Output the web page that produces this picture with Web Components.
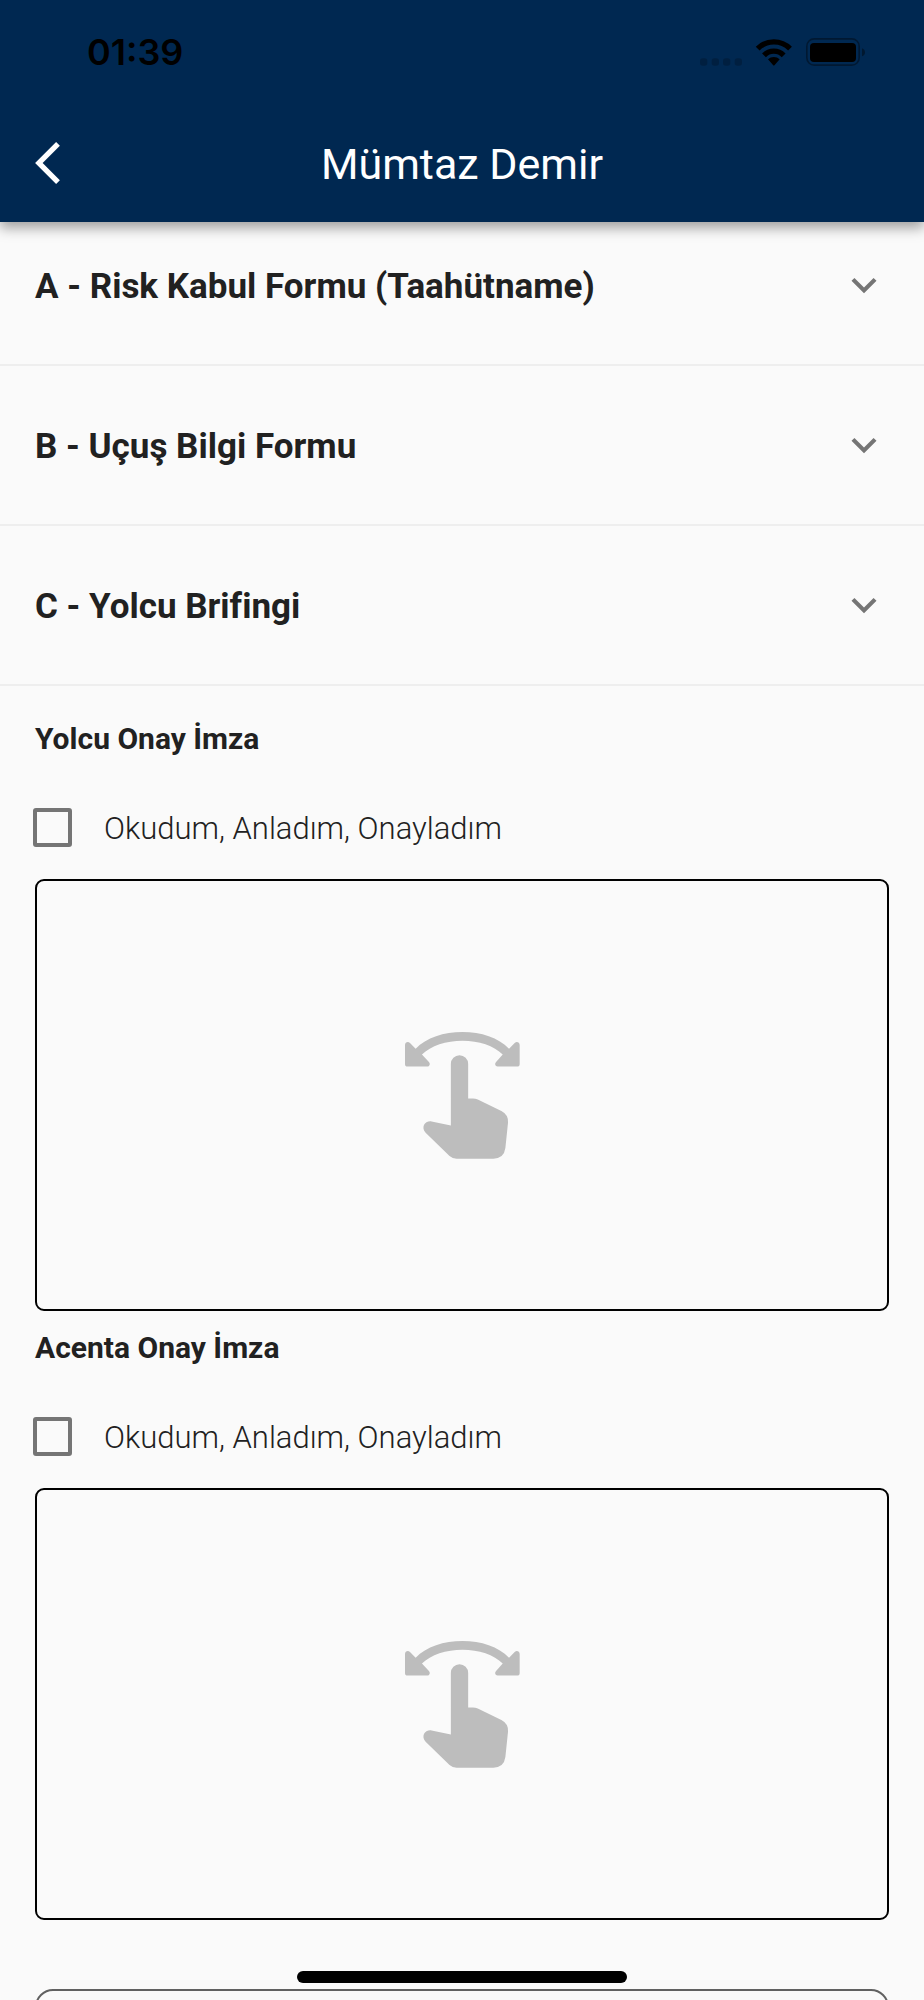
<!DOCTYPE html>
<html lang="tr">
<head>
<meta charset="utf-8">
<meta name="viewport" content="width=device-width, initial-scale=1">
<title>Mümtaz Demir</title>
<style>
  body { margin: 0; background: #fafafa; color: #212121; font-family: Roboto, "Liberation Sans", sans-serif; }
</style>
</head>
<body>
<app-shell>
  <status-bar slot="header">01:39</status-bar>
  <top-bar slot="header">Mümtaz Demir</top-bar>

  <expansion-panel>A - Risk Kabul Formu (Taahütname)</expansion-panel>
  <expansion-panel>B - Uçuş Bilgi Formu</expansion-panel>
  <expansion-panel>C - Yolcu Brifingi</expansion-panel>

  <form-body>
    <approval-section>
      <span slot="title">Yolcu Onay İmza</span>
      <check-field>Okudum, Anladım, Onayladım</check-field>
      <signature-pad></signature-pad>
    </approval-section>
    <approval-section>
      <span slot="title">Acenta Onay İmza</span>
      <check-field>Okudum, Anladım, Onayladım</check-field>
      <signature-pad></signature-pad>
    </approval-section>
    <outline-button label="Kaydet"></outline-button>
  </form-body>
</app-shell>

<script>
  const define = (name, html, setup) => {
    const template = document.createElement('template');
    template.innerHTML = html;
    customElements.define(name, class extends HTMLElement {
      constructor() {
        super();
        this.attachShadow({ mode: 'open' }).append(template.content.cloneNode(true));
      }
      connectedCallback() { if (setup) setup(this, this.shadowRoot); }
    });
  };

  define('app-shell', `
    <style>
      :host { display: flex; flex-direction: column; height: 100vh; overflow: hidden; position: relative; }
      header { position: relative; z-index: 1; background: #002851; box-shadow: 0 6px 12px rgba(0, 0, 0, .36); }
      /* The list is scrolled slightly under the header. */
      main { flex: 1; min-height: 0; margin-top: -16px; overflow-y: auto; scrollbar-width: none; }
      .home { position: absolute; z-index: 2; bottom: 17px; left: 50%; width: 330px; height: 12px; margin-left: -165px; border-radius: 6px; background: #000; }
    </style>
    <header><slot name="header"></slot></header>
    <main><slot></slot></main>
    <div class="home"></div>`);

  define('status-bar', `
    <style>
      :host { display: flex; align-items: center; justify-content: space-between; height: 104px; padding: 0 57px 0 87px; color: #000; font: 600 36px/40px Inter, sans-serif; }
      svg { display: block; width: 167px; height: 28px; }
    </style>
    <time><slot></slot></time>
    <svg viewBox="60 54 501 84" aria-hidden="true">
      <g opacity=".2">
        <rect x="60" y="115" width="22" height="22" rx="8"/><rect x="95" y="115" width="22" height="22" rx="8"/>
        <rect x="129" y="115" width="22" height="22" rx="8"/><rect x="164" y="115" width="22" height="22" rx="8"/>
      </g>
      <g fill="none" stroke="#000" stroke-width="16">
        <path d="M233 86a68 68 0 0 1 97 0"/><path d="M252 106a41 41 0 0 1 59 0"/>
      </g>
      <path d="M264 118a25 25 0 0 1 35 0l-15 17q-3 3-5 0z"/>
      <rect x="380.500" y="56.500" width="157" height="79" rx="22" fill="none" stroke="#000" stroke-width="5" opacity=".38"/>
      <rect x="390" y="69" width="138" height="57" rx="12"/>
      <path d="M546 85q9 3 9 12t-9 12z" opacity=".4"/>
    </svg>`);

  define('top-bar', `
    <style>
      :host { display: grid; grid-template-columns: 52px 1fr 52px; align-items: center; height: 118px; padding: 0 35px; color: #fff; }
      button { display: flex; align-items: center; width: 52px; height: 52px; padding: 0; border: 0; background: none; color: inherit; cursor: pointer; }
      svg { width: 25px; height: 42px; fill: currentColor; }
      h1 { margin: 0; padding-top: 2px; text-align: center; font-size: 43px; font-weight: 400; line-height: 52px; }
    </style>
    <button type="button" aria-label="Geri">
      <svg viewBox="0 2.1 11.67 19.8" aria-hidden="true"><path d="M11.67 3.87 9.9 2.1 0 12l9.9 9.900 1.770-1.770L3.540 12z"/></svg>
    </button>
    <h1><slot></slot></h1>`);

  define('expansion-panel', `
    <style>
      :host { display: block; border-bottom: 2px solid #eee; }
      button { display: flex; align-items: center; justify-content: space-between; box-sizing: border-box; width: 100%; height: 158px; padding: 0 35px; border: 0; background: none; color: inherit; font: inherit; font-size: 35px; font-weight: 700; line-height: 44px; text-align: left; cursor: pointer; }
      span { padding-top: 4px; }
      svg { flex: none; width: 50px; height: 50px; fill: #757575; }
    </style>
    <button type="button" aria-expanded="false">
      <span><slot></slot></span>
      <svg viewBox="0 0 24 24" aria-hidden="true"><path d="M16.590 8.590 12 13.170 7.410 8.590 6 10l6 6 6-6z"/></svg>
    </button>`,
    (host, root) => {
      const button = root.querySelector('button');
      button.onclick = () => button.setAttribute('aria-expanded', button.getAttribute('aria-expanded') !== 'true');
    });

  define('form-body', `
    <style>:host { display: block; padding: 16px 35px 35px; }</style>
    <slot></slot>`);

  define('approval-section', `
    <style>
      :host { display: block; }
      h2 { display: flex; align-items: center; height: 73px; margin: 0; font-size: 30px; font-weight: 700; line-height: 40px; }
    </style>
    <section><h2><slot name="title"></slot></h2><slot></slot></section>`);

  define('check-field', `
    <style>
      :host { display: block; margin-left: -2px; }
      label { display: flex; align-items: center; gap: 32px; height: 104px; font-size: 31px; font-weight: 300; line-height: 40px; cursor: pointer; }
      span { padding-top: 4px; }
      input { appearance: none; flex: none; box-sizing: border-box; width: 39px; height: 39px; margin: 0; border: 4px solid #757575; border-radius: 3px; cursor: pointer; }
      input:checked { background: #757575; }
    </style>
    <label><input type="checkbox"><span><slot></slot></span></label>`);

  define('signature-pad', `
    <style>
      :host { display: flex; align-items: center; justify-content: center; box-sizing: border-box; height: 432px; border: 2px solid #000; border-radius: 9px; }
      svg { width: 115px; height: 127px; fill: #bdbdbd; }
    </style>
    <svg viewBox="73 64 346 382" role="img" aria-label="İmza alanı">
      <path d="M88 97 105 114C137 81 190 64 246 64s108 17 140 50l17-17c6-6 15-2 15 6v57q0 8-8 8h-58c-8 0-10-9-5-14l20-22C341 105 295 90 246 90s-95 15-122 42l21 22c5 5 2 14-5 14H81q-8 0-8-8v-57c0-8 9-12 15-6z"/>
      <path d="M211 345V160a26 26 0 0 1 52 0V264h14q8 0 15 3l71 35q21 11 20 34l-8 77q-4 31-36 32H228q-12 0-21-8L135 367c-15-16-2-37 18-34z"/>
    </svg>`);

  define('outline-button', `
    <style>
      :host { display: block; margin-top: 69px; }
      button { display: block; box-sizing: border-box; width: 100%; height: 114px; border: 2px solid #616161; border-radius: 18px; background: none; cursor: pointer; }
    </style>
    <button type="button"></button>`,
    (host, root) => root.querySelector('button').setAttribute('aria-label', host.getAttribute('label')));
</script>
</body>
</html>
